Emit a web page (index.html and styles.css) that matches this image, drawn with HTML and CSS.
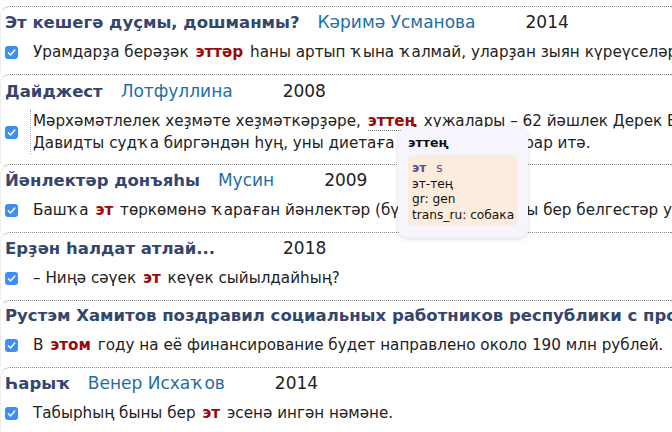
FILE: index.html
```html
<!DOCTYPE html>
<html>
<head>
<meta charset="utf-8">
<link rel="stylesheet" href="styles.css">
</head>
<body>
<div class="list">
  <div class="item">
    <div class="head"><span class="title">Эт кешегә дуҫмы, дошманмы?</span><span class="author">Кәримә Усманова</span><span class="year">2014</span></div>
    <div class="row"><span class="cb"><svg viewBox="0 0 13 13" width="13" height="13"><rect width="13" height="13" rx="3" fill="#3d8ef5"/><path d="M3.4 6.8 L5.5 9 L9.8 4" stroke="#fff" stroke-width="1.4" fill="none" stroke-linecap="round" stroke-linejoin="round"/></svg></span><div class="sent">Урамдарҙа берәҙәк <b class="kw">эттәр</b> һаны артып ҡына ҡалмай, уларҙан зыян күреүселәр ҙә арта.</div></div>
  </div>
  <div class="item">
    <div class="head"><span class="title">Дайджест</span><span class="author">Лотфуллина</span><span class="year">2008</span></div>
    <div class="row"><span class="cb"><svg viewBox="0 0 13 13" width="13" height="13"><rect width="13" height="13" rx="3" fill="#3d8ef5"/><path d="M3.4 6.8 L5.5 9 L9.8 4" stroke="#fff" stroke-width="1.4" fill="none" stroke-linecap="round" stroke-linejoin="round"/></svg></span><div class="sent focus">Мәрхәмәтлелек хеҙмәте хеҙмәткәрҙәре, <b class="kw hover">эттең</b> хужалары – 62 йәшлек Дерек Беккер һәм<br>Давидты судҡа биргәндән һуң, уны диетаға ултыртырға ҡарар итә.</div></div>
  </div>
  <div class="item">
    <div class="head"><span class="title">Йәнлектәр донъяһы</span><span class="author">Мусин</span><span class="year">2009</span></div>
    <div class="row"><span class="cb"><svg viewBox="0 0 13 13" width="13" height="13"><rect width="13" height="13" rx="3" fill="#3d8ef5"/><path d="M3.4 6.8 L5.5 9 L9.8 4" stroke="#fff" stroke-width="1.4" fill="none" stroke-linecap="round" stroke-linejoin="round"/></svg></span><div class="sent">Башҡа <b class="kw">эт</b> төркөмөнә ҡараған йәнлектәр (бүре, төлкө) һаҡлы бер белгестәр уртаҡ.</div></div>
  </div>
  <div class="item">
    <div class="head"><span class="title">Ерҙән һалдат атлай...</span><span class="author"></span><span class="year">2018</span></div>
    <div class="row"><span class="cb"><svg viewBox="0 0 13 13" width="13" height="13"><rect width="13" height="13" rx="3" fill="#3d8ef5"/><path d="M3.4 6.8 L5.5 9 L9.8 4" stroke="#fff" stroke-width="1.4" fill="none" stroke-linecap="round" stroke-linejoin="round"/></svg></span><div class="sent">– Ниңә сәүек <b class="kw">эт</b> кеүек сыйылдайһың?</div></div>
  </div>
  <div class="item">
    <div class="head"><span class="title">Рустэм Хамитов поздравил социальных работников республики с профессиональным праздником</span></div>
    <div class="row"><span class="cb"><svg viewBox="0 0 13 13" width="13" height="13"><rect width="13" height="13" rx="3" fill="#3d8ef5"/><path d="M3.4 6.8 L5.5 9 L9.8 4" stroke="#fff" stroke-width="1.4" fill="none" stroke-linecap="round" stroke-linejoin="round"/></svg></span><div class="sent">В <b class="kw">этом</b> году на её финансирование будет направлено около 190 млн рублей.</div></div>
  </div>
  <div class="item">
    <div class="head"><span class="title">Һарыҡ</span><span class="author">Венер Исхаҡов</span><span class="year">2014</span></div>
    <div class="row"><span class="cb"><svg viewBox="0 0 13 13" width="13" height="13"><rect width="13" height="13" rx="3" fill="#3d8ef5"/><path d="M3.4 6.8 L5.5 9 L9.8 4" stroke="#fff" stroke-width="1.4" fill="none" stroke-linecap="round" stroke-linejoin="round"/></svg></span><div class="sent">Табырһың быны бер <b class="kw">эт</b> эсенә ингән нәмәне.</div></div>
  </div>
</div>
<div class="tip">
  <div class="tip-title">эттең</div>
  <div class="tip-box">
    <div class="tip-lemma"><b>эт</b> <span class="pos">s</span></div>
    <div>эт-тең</div>
    <div>gr: gen</div>
    <div>trans_ru: собака</div>
  </div>
</div>
</body>
</html>
```
FILE: styles.css
```css
html, body {
  margin: 0;
  padding: 0;
  background: #fff;
  overflow: hidden;
}
body {
  font-family: "DejaVu Sans", "Liberation Sans", sans-serif;
  color: #222;
  width: 672px;
  height: 432px;
  position: relative;
}
.list {
  padding-top: 6px;
}
.item {
  border-top: 1px dotted #888;
  border-left: 1px solid #eee;
  border-top-left-radius: 10px;
  padding: 3px 0 11px 4px;
  white-space: nowrap;
}
.item:nth-child(2) .head {
  margin-top: 1px;
}
.item:nth-child(2) {
  padding-bottom: 10px;
}
.head {
  display: flex;
  align-items: baseline;
  line-height: 24px;
}
.title {
  font-weight: bold;
  font-size: 16.5px;
  color: #34466e;
  margin-right: 18px;
}
.author {
  font-size: 17px;
  color: #1f6ea6;
}
.year {
  font-size: 17px;
  color: #222;
  margin-left: 50px;
}
.row {
  display: flex;
  align-items: center;
  margin-top: 6px;
}
.cb {
  width: 13px;
  height: 13px;
  flex: none;
  display: flex;
}
.sent {
  font-size: 15.2px;
  line-height: 22px;
  margin-left: 12px;
  padding-left: 2px;
  border-left: 1px dotted transparent;
}
.sent.focus {
  border-left-color: #a89ee0;
}
.kw {
  color: #9a0a0a;
  font-weight: bold;
  margin: 0 2px;
}
.kw.hover {
  border-bottom: 1px dotted #777;
}
.tip {
  position: absolute;
  left: 398px;
  top: 127px;
  width: 110px;
  padding: 8px 10px 12px;
  background: #f6f5fd;
  border-radius: 10px;
  box-shadow: 0 1px 5px rgba(0,0,0,0.15);
  font-size: 12.2px;
  color: #111;
  white-space: nowrap;
}
.tip-title {
  font-weight: bold;
  font-size: 12.5px;
  line-height: 16px;
  margin-bottom: 4px;
}
.tip-box {
  background: #fcecde;
  border-radius: 5px;
  padding: 6px 4px 3px;
  line-height: 15.5px;
}
.tip-lemma {
  color: #5b4a91;
}
.tip-lemma .pos {
  margin-left: 6px;
}
```
